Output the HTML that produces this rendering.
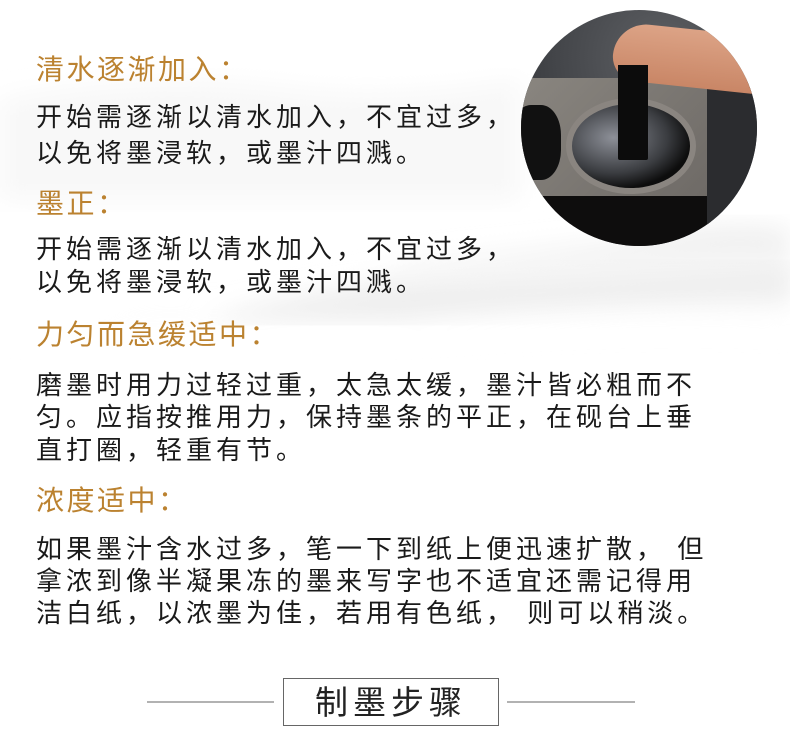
<!DOCTYPE html>
<html><head><meta charset="utf-8"><style>
*{margin:0;padding:0}
body{width:790px;height:748px;overflow:hidden;background:#fff;position:relative;font-family:"Liberation Sans","Noto Sans CJK SC",sans-serif}
.bg{position:absolute;left:0;top:0}
.t{position:absolute;left:36px;white-space:nowrap}
.h{color:#bb8230;font-size:28px;letter-spacing:2.5px}
.b{color:#1a1a1a;font-size:26px;letter-spacing:4px}
.circ{position:absolute;left:521px;top:10px;width:236px;height:236px;border-radius:50%;overflow:hidden;background:radial-gradient(circle at 60% 20%,#5e6064,#35373b 70%)}
</style></head><body>
<svg class="bg" width="790" height="748">
<defs>
<filter id="bl"><feGaussianBlur stdDeviation="12"/></filter>
<linearGradient id="g1" x1="0" y1="0" x2="0" y2="1"><stop offset="0" stop-color="#ececec"/><stop offset="1" stop-color="#fff" stop-opacity="0"/></linearGradient>
</defs>
<path d="M0 100 Q150 70 300 90 Q400 100 520 80 L520 200 L0 200Z" fill="#f8f8f8" filter="url(#bl)"/>
<path d="M0 330 Q120 300 220 310 Q330 290 420 260 Q520 250 620 240 Q720 220 790 230 L790 330 Q600 320 400 345 Q200 350 0 345Z" fill="url(#g1)" filter="url(#bl)"/>
<path d="M200 320 Q320 285 480 280 Q600 275 790 265 L790 300 Q600 300 400 320Z" fill="#eeeeee" filter="url(#bl)"/>
<line x1="147" y1="702" x2="274" y2="702" stroke="#666" stroke-width="1"/>
<line x1="507" y1="702" x2="635" y2="702" stroke="#666" stroke-width="1"/>
<rect x="283.5" y="678.5" width="215" height="47" fill="#fff" stroke="#666"/>
<text x="391" y="714" text-anchor="middle" font-size="33" fill="#222" font-family="Liberation Sans,Noto Sans CJK SC,sans-serif" letter-spacing="5">制墨步骤</text>
</svg>
<div class="circ">
<div style="position:absolute;left:-5px;top:68px;width:195px;height:118px;background:linear-gradient(135deg,#8a8680,#6e6a66);border-radius:3px"></div>
<div style="position:absolute;left:45px;top:88px;width:118px;height:84px;border-radius:50%;background:radial-gradient(ellipse at 35% 40%,#8d9098,#3a3c40 50%,#0d0d0d 72%);border:6px solid #8a8580"></div>
<div style="position:absolute;left:-10px;top:95px;width:50px;height:75px;background:#111;border-radius:40%"></div>
<div style="position:absolute;left:-5px;top:186px;width:195px;height:60px;background:#0e0d0d"></div>
<div style="position:absolute;left:186px;top:68px;width:60px;height:180px;background:#2b2c2f"></div>
<div style="position:absolute;left:97px;top:55px;width:30px;height:95px;background:#0c0c0c;border-radius:2px"></div>
<div style="position:absolute;left:92px;top:20px;width:170px;height:58px;background:linear-gradient(180deg,#dca386,#c98666);border-radius:40px 10px 20px 30px;transform:rotate(6deg)"></div>
<div style="position:absolute;left:97px;top:55px;width:30px;height:20px;background:#0c0c0c"></div>
</div>
<div class="t h" style="top:48px">清水逐渐加入：</div>
<div class="t b" style="top:97px">开始需逐渐以清水加入，不宜过多，</div>
<div class="t b" style="top:133px">以免将墨浸软，或墨汁四溅。</div>
<div class="t h" style="top:182px">墨正：</div>
<div class="t b" style="top:229px">开始需逐渐以清水加入，不宜过多，</div>
<div class="t b" style="top:262px">以免将墨浸软，或墨汁四溅。</div>
<div class="t h" style="top:313px">力匀而急缓适中：</div>
<div class="t b" style="top:365px">磨墨时用力过轻过重，太急太缓，墨汁皆必粗而不</div>
<div class="t b" style="top:397px">匀。应指按推用力，保持墨条的平正，在砚台上垂</div>
<div class="t b" style="top:430px">直打圈，轻重有节。</div>
<div class="t h" style="top:479px">浓度适中：</div>
<div class="t b" style="top:529px">如果墨汁含水过多，笔一下到纸上便迅速扩散， 但</div>
<div class="t b" style="top:561px">拿浓到像半凝果冻的墨来写字也不适宜还需记得用</div>
<div class="t b" style="top:593px">洁白纸，以浓墨为佳，若用有色纸， 则可以稍淡。</div>
</body></html>
